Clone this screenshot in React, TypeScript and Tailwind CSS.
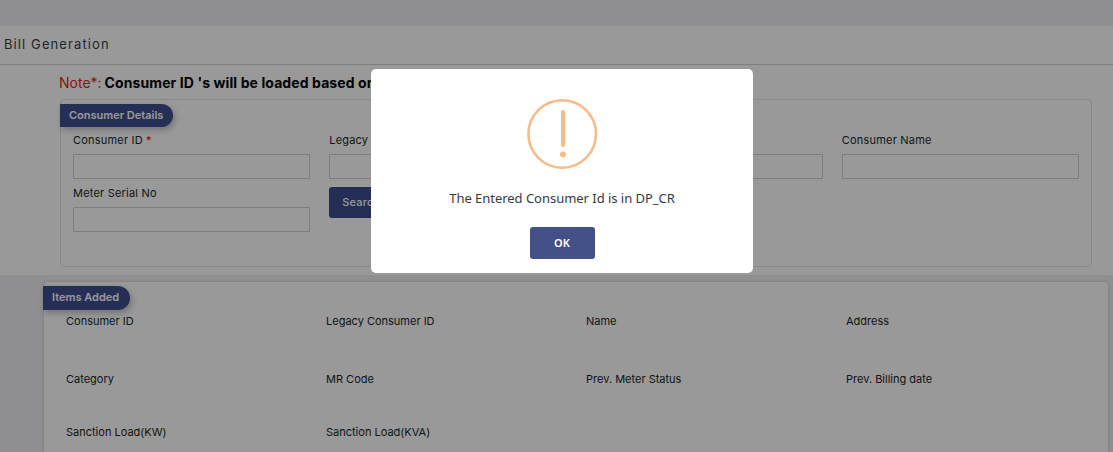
const labelClass = "block text-[11px] leading-[18px] pt-px -mb-px text-[#212529] tracking-[0.2px]";
const inputClass = "block w-full h-[25px] mt-[6px] border border-[#ced4da] bg-white";

function Field({ label, required }: { label: string; required?: boolean }) {
  return (
    <div>
      <label className={labelClass}>
        {label}
        {required && <span className="text-red-600"> *</span>}
      </label>
      <div className={inputClass} />
    </div>
  );
}

function Pill({ children, className }: { children: React.ReactNode; className: string }) {
  return (
    <div className={`flex items-center rounded-r-[12px] bg-[#3e4d8e] pb-px text-[11px] font-semibold text-white shadow-[2px_3px_6px_rgba(0,0,0,0.25)] ${className}`}>
      {children}
    </div>
  );
}

const items = [
  ["Consumer ID", "Legacy Consumer ID", "Name", "Address"],
  ["Category", "MR Code", "Prev. Meter Status", "Prev. Billing date"],
  ["Sanction Load(KW)", "Sanction Load(KVA)", "", ""],
];
const rowHeights = ["h-[58px]", "h-[53px]", "h-[52px]"];

export default function App() {
  return (
    <div className="relative h-screen overflow-hidden bg-[#eeeef2] font-['Inter',sans-serif]">
      <div className="pt-[26px]">
        <div className="bg-white h-[249px]">
          <div className="flex h-[39px] items-center border-b border-[#d4d4d4] pl-[4px] text-[13px] tracking-[1.1px] text-[#3a3f47]">
            Bill Generation
          </div>
          <div className="pl-[60px] pr-[21px]">
            <p className="pt-[8px] h-[34px] whitespace-nowrap text-[14px] leading-[20px] -ml-px">
              <span className="mr-[-1px] text-[#dc2626]">Note*: </span>
              <span className="font-bold tracking-[0.1px] text-black">Consumer ID 's will be loaded based on the selected location</span>
            </p>
            <div className="h-[168px] rounded-[4px] border border-[#e4e4e4] pt-[4px]">
              <Pill className="-ml-px h-[23px] w-[113px] pl-[9px]">Consumer Details</Pill>
              <div className="grid grid-cols-4 gap-x-[19px] gap-y-[4px] px-[12px] pt-[3px]">
                <Field label="Consumer ID" required />
                <Field label="Legacy Consumer ID" />
                <Field label="Mobile No" />
                <Field label="Consumer Name" />
                <Field label="Meter Serial No" />
                <div className="pt-[4px]">
                  <button className="h-[31px] rounded-[3px] bg-[#3e4d8e] px-[13px] text-[11px] font-medium tracking-[0.2px] text-white">Search</button>
                </div>
              </div>
            </div>
          </div>
        </div>
        <div className="mt-[7px] ml-[44px] mr-[5px] h-[200px] rounded-[4px] bg-white pt-[4px] shadow-[0_0_3px_rgba(0,0,0,0.15)]">
          <Pill className="-ml-px h-[24px] w-[87px] pl-[9px]">Items Added</Pill>
          <div className="pl-[22px]">
            {items.map((row, i) => (
              <div key={i} className={`grid grid-cols-[260px_260px_260px_260px] text-[11px] leading-[22px] text-[#212529] ${rowHeights[i]}`}>
                {row.map((cell, j) => (
                  <div key={j}>{cell}</div>
                ))}
              </div>
            ))}
          </div>
        </div>
      </div>

      <div className="absolute inset-0 flex justify-center bg-black/40 pl-[10px] pt-[69px]">
        <div className="flex h-[204px] w-[382px] flex-col items-center rounded-[5px] bg-white font-['Noto_Sans',sans-serif]">
          <svg width="72" height="72" viewBox="0 0 72 72" className="mt-[29px]">
            <circle cx="36.2" cy="36" r="33.8" fill="none" stroke="#f8bb86" strokeWidth="2.5" />
            <rect x="35" y="12" width="4" height="37" rx="2" fill="#f8bb86" />
            <circle cx="37" cy="56.5" r="3" fill="#f8bb86" />
          </svg>
          <p className="ml-px mt-[18px] text-[13px] leading-[20px] tracking-[-0.03px] text-[#333b47]">The Entered Consumer Id is in DP_CR</p>
          <button className="ml-px mt-[19px] h-[32px] w-[65px] rounded-[3px] bg-[#435088] text-[11px] font-semibold text-white">OK</button>
        </div>
      </div>
    </div>
  );
}
